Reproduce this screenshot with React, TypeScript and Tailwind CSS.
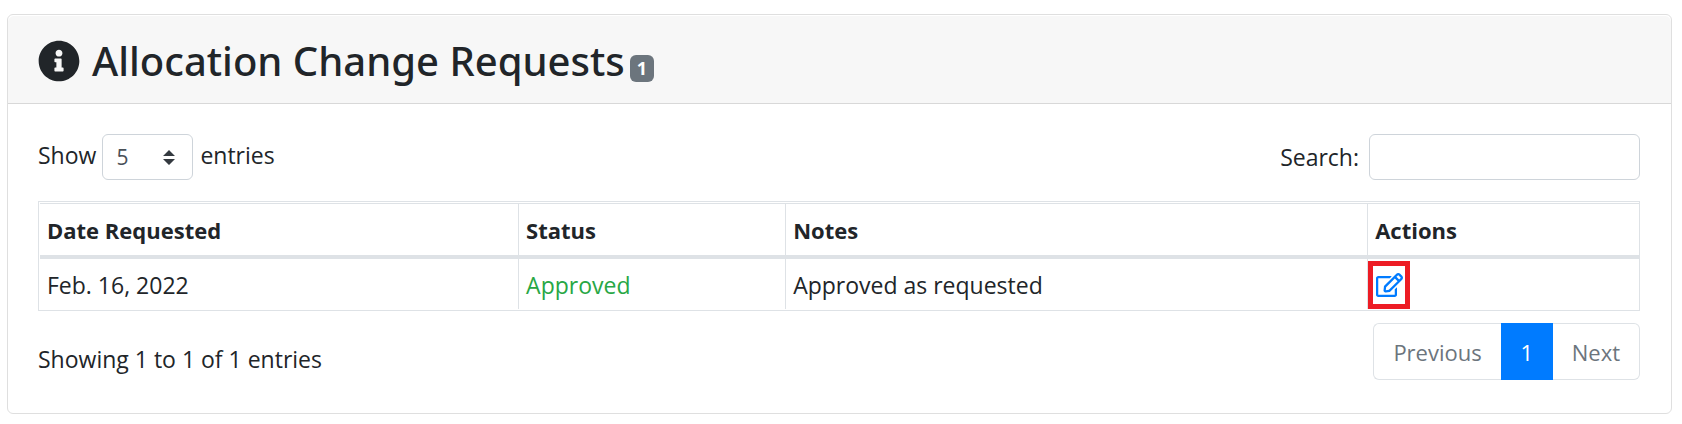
import { FaInfoCircle, FaRegEdit } from "react-icons/fa";

const requests = [
  { date: "Feb. 16, 2022", status: "Approved", notes: "Approved as requested" },
];

const columns = [
  { label: "Date Requested", width: "w-[29.9%] pl-[7px]" },
  { label: "Status", width: "w-[16.7%] border-l pl-[7px]" },
  { label: "Notes", width: "w-[36.4%] border-l pl-[7px]" },
  { label: "Actions", width: "border-l pl-[7px]" },
];

function RequestTable() {
  return (
    <table className="w-full table-fixed border-separate border-spacing-0 border border-[#dee2e6] pt-px pb-px pl-px text-left">
      <thead>
        <tr>
          {columns.map((column) => (
            <th
              key={column.label}
              scope="col"
              className={`h-14 border-t border-b-4 border-[#dee2e6] p-0 text-[22px] font-bold ${column.width}`}
            >
              {column.label}
            </th>
          ))}
        </tr>
      </thead>
      <tbody>
        {requests.map((request) => (
          <tr key={request.date}>
            <td className="h-[50px] pt-0.5 pr-0 pb-0 pl-[7px]">{request.date}</td>
            <td className="border-l border-[#dee2e6] pt-0.5 pr-0 pb-0 pl-[7px] text-[#28a745]">
              {request.status}
            </td>
            <td className="border-l border-[#dee2e6] pt-0.5 pr-0 pb-0 pl-[7px]">
              {request.notes}
            </td>
            <td className="border-l border-[#dee2e6] px-0 pt-0.5 pb-0">
              <a
                href="#edit"
                aria-label="Edit request"
                className="flex h-12 w-[42px] items-center justify-center border-5 border-[#ed1c24] text-[#007bff]"
              >
                <FaRegEdit className="h-6 w-[27px]" />
              </a>
            </td>
          </tr>
        ))}
      </tbody>
    </table>
  );
}

function Pagination() {
  return (
    <nav aria-label="Table pages" className="flex h-[57px] text-[22px] text-[#6c757d]">
      <button
        type="button"
        className="rounded-l-md border border-r-0 border-[#dee2e6] px-[19px]"
      >
        Previous
      </button>
      <button type="button" aria-current="page" className="w-[52px] bg-[#007bff] text-white">
        1
      </button>
      <button
        type="button"
        className="rounded-r-md border border-l-0 border-[#dee2e6] px-[19px]"
      >
        Next
      </button>
    </nav>
  );
}

export default function App() {
  return (
    <main className="bg-white pt-3.5 pr-2.5 pb-2.5 pl-[7px] font-['Open_Sans',sans-serif] text-[23px] leading-9 text-[#212529]">
      <section className="rounded-md border border-[#dfdfdf]">
        <header className="mt-px flex items-center rounded-t-md border-b border-[#d8d8d8] bg-[#f7f7f7] px-[30px] pt-[19px] pb-[17px]">
          <h2 className="flex items-center font-['Noto_Sans',sans-serif] text-[40px] leading-[51px] font-medium">
            <FaInfoCircle className="mr-3 size-[42px] shrink-0" />
            Allocation Change Requests
          </h2>
          <span className="mt-4 ml-[5px] rounded-md bg-[#6c757d] px-[7px] text-[18px] leading-[27px] font-bold text-white">
            1
          </span>
        </header>

        <div className="pt-[30px] pr-[31px] pb-[33px] pl-[30px]">
          <div className="flex items-start justify-between">
            <div className="flex items-start">
              <label htmlFor="entries" className="pt-[3px]">
                Show
              </label>
              <div className="relative mr-[7px] ml-1.5">
                <select
                  id="entries"
                  defaultValue="5"
                  className="block h-[46px] w-[91px] appearance-none rounded-md border border-[#ced4da] bg-white pl-[13px] text-[21px] leading-8 text-[#495057]"
                >
                  <option>5</option>
                  <option>10</option>
                  <option>25</option>
                </select>
                <svg
                  viewBox="0 0 4 5"
                  aria-hidden="true"
                  className="pointer-events-none absolute top-4 right-[18px] h-[15px] w-3"
                >
                  <path fill="#343a40" d="M2 0L0 2h4zm0 5L0 3h4z" />
                </svg>
              </div>
              <label htmlFor="entries" className="pt-[3px]">
                entries
              </label>
            </div>
            <div className="flex items-center gap-2.5">
              <label htmlFor="search">Search:</label>
              <input
                id="search"
                type="search"
                className="h-[46px] w-[271px] rounded-md border border-[#ced4da] px-3 text-[21px]"
              />
            </div>
          </div>

          <div className="mt-[21px] mb-3">
            <RequestTable />
          </div>

          <div className="flex items-start justify-between">
            <p className="pt-[18px]">Showing 1 to 1 of 1 entries</p>
            <Pagination />
          </div>
        </div>
      </section>
    </main>
  );
}
